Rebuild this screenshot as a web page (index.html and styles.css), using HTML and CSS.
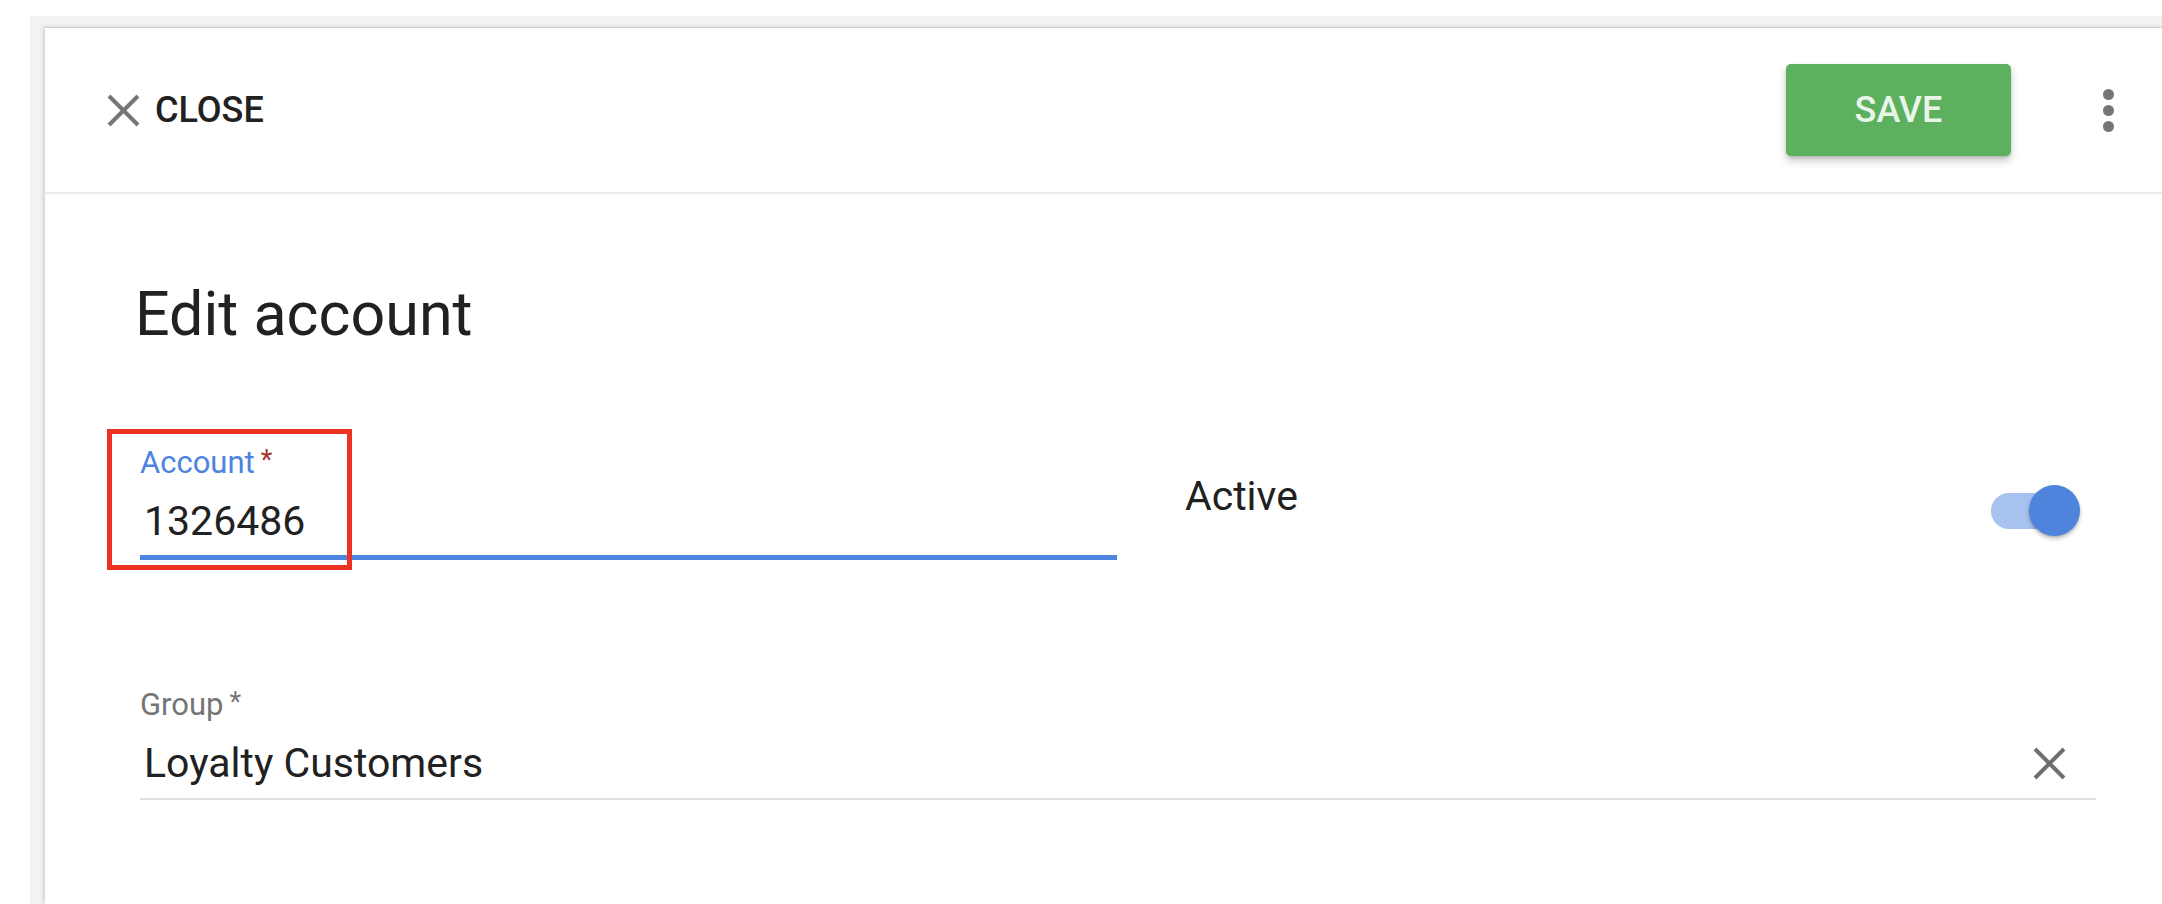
FILE: index.html
```html
<!DOCTYPE html>
<html lang="en">
<head>
<meta charset="utf-8">
<title>Edit account</title>
<link rel="stylesheet" href="styles.css">
</head>
<body>
<div class="backdrop">
  <div class="panel">
    <header class="toolbar">
      <button class="close-btn" type="button">
        <svg class="close-icon" width="33" height="33" viewBox="0 0 33 33" aria-hidden="true">
          <path d="M2 2 L31 31 M31 2 L2 31" stroke="#767676" stroke-width="4" fill="none"/>
        </svg>
        <span class="close-label">CLOSE</span>
      </button>
      <div class="toolbar-spacer"></div>
      <button class="save-btn" type="button">SAVE</button>
      <div class="kebab" aria-label="More">
        <span class="dot"></span>
        <span class="dot"></span>
        <span class="dot"></span>
      </div>
    </header>
    <main class="content">
      <h1 class="title">Edit account</h1>
      <div class="form-grid">
        <div class="field field-focused">
          <div class="highlight-box"></div>
          <div class="field-label label-focused">Account<span class="req req-focused">*</span></div>
          <div class="field-value"><span>1326486</span></div>
        </div>
        <div class="active-col">
          <div class="active-label">Active</div>
          <div class="toggle">
            <div class="toggle-track"></div>
            <div class="toggle-knob"></div>
          </div>
        </div>
        <div class="field field-wide">
          <div class="field-label">Group<span class="req">*</span></div>
          <div class="field-value">
            <span>Loyalty Customers</span>
            <svg class="clear-icon" width="33" height="33" viewBox="0 0 33 33" aria-hidden="true">
              <path d="M2 2 L31 31 M31 2 L2 31" stroke="#6e6e6e" stroke-width="4" fill="none"/>
            </svg>
          </div>
        </div>
      </div>
    </main>
  </div>
</div>
</body>
</html>
```
FILE: styles.css
```css
* { box-sizing: border-box; }

html, body {
  margin: 0;
  padding: 0;
  background: #ffffff;
  overflow: hidden;
  height: 904px;
}

body {
  font-family: Roboto, "Liberation Sans", Arial, sans-serif;
  color: #212121;
}

.backdrop {
  margin-left: 30px;
  margin-top: 16px;
  background: #f1f2f4;
  padding: 12px 0 0 15px;
  height: 888px;
}

.panel {
  background: #ffffff;
  height: 876px;
  box-shadow: -2px -1px 4px rgba(0, 0, 0, 0.13), 0 -1px 1px rgba(0, 0, 0, 0.08);
}

.toolbar {
  display: flex;
  align-items: center;
  height: 166px;
  border-bottom: 2px solid #ebebeb;
  padding: 0 24px 0 62px;
}

.close-btn {
  display: flex;
  align-items: center;
  gap: 15px;
  background: none;
  border: 0;
  padding: 0;
  margin: 0;
  font-family: inherit;
  cursor: pointer;
}

.close-icon { display: block; }

.close-label {
  font-size: 36px;
  font-weight: 500;
  line-height: 42px;
  color: #212121;
}

.toolbar-spacer { flex: 1; }

.save-btn {
  width: 225px;
  height: 92px;
  border: 0;
  border-radius: 5px;
  background: #5db05e;
  color: rgba(255, 255, 255, 0.9);
  font-family: inherit;
  font-size: 36px;
  font-weight: 500;
  line-height: 42px;
  padding: 0;
  box-shadow: 0 5px 9px rgba(0, 0, 0, 0.2), 0 2px 3px rgba(0, 0, 0, 0.12);
  cursor: pointer;
}

.kebab {
  width: 60px;
  margin-left: 67px;
  display: flex;
  flex-direction: column;
  align-items: center;
  gap: 5px;
}

.dot {
  width: 11px;
  height: 11px;
  border-radius: 50%;
  background: #757575;
}

.content {
  padding: 84px 66px 0 95px;
}

.title {
  margin: 0 0 92px -5px;
  font-size: 61px;
  font-weight: 400;
  line-height: 72px;
  color: #212121;
}

.form-grid {
  display: grid;
  grid-template-columns: 977px 1fr;
  column-gap: 68px;
  row-gap: 124px;
}

.field {
  position: relative;
  border-bottom: 2px solid #e2e2e2;
  padding-bottom: 11px;
}

.field-focused {
  border-bottom: 5px solid #4c84e0;
  padding-bottom: 10px;
}

.field-wide { grid-column: 1 / span 2; }

.field-label {
  font-size: 31px;
  line-height: 36px;
  color: #757575;
  margin-bottom: 16px;
}

.label-focused { color: #4c84e0; }

.req {
  font-size: 27px;
  margin-left: 6px;
  vertical-align: 4px;
  color: #757575;
}

.req-focused { color: #a3322a; }

.field-value {
  display: flex;
  align-items: center;
  justify-content: space-between;
  font-size: 41px;
  line-height: 48px;
  color: #212121;
  padding-left: 4px;
}

.clear-icon {
  display: block;
  margin-right: 30px;
}

.highlight-box {
  position: absolute;
  left: -33px;
  top: -13px;
  width: 245px;
  height: 141px;
  border: 5px solid #ea3322;
  pointer-events: none;
}

.active-col {
  display: flex;
  align-items: flex-start;
  justify-content: space-between;
  padding-right: 16px;
}

.active-label {
  margin-top: 30px;
  font-size: 41px;
  line-height: 48px;
  color: #212121;
}

.toggle {
  position: relative;
  margin-top: 43px;
  width: 89px;
  height: 51px;
}

.toggle-track {
  margin-top: 8px;
  width: 85px;
  height: 36px;
  border-radius: 18px;
  background: #a7c2ef;
}

.toggle-knob {
  position: absolute;
  right: 0;
  top: 0;
  width: 51px;
  height: 51px;
  border-radius: 50%;
  background: #4f84dd;
  box-shadow: 0 3px 4px rgba(0, 0, 0, 0.22), 0 1px 2px rgba(0, 0, 0, 0.15);
}
```
